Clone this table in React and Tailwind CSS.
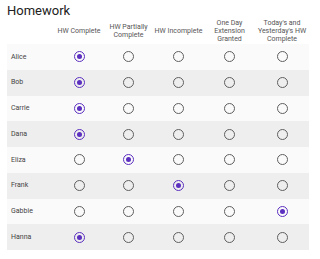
import React from "react";

const cols = [
  ["HW Complete"],
  ["HW Partially", "Complete"],
  ["HW Incomplete"],
  ["One Day", "Extension", "Granted"],
  ["Today's and", "Yesterday's HW", "Complete"],
];

const rows = [
  ["Alice", 0],
  ["Bob", 0],
  ["Carrie", 0],
  ["Dana", 0],
  ["Eliza", 1],
  ["Frank", 2],
  ["Gabbie", 4],
  ["Hanna", 0],
];

const widths = ["w-[50px]", "w-[49px]", "w-[51px]", "w-[51px]", "w-[54px]"];

function Radio({ on }) {
  return on ? (
    <div className="w-[11px] h-[11px] rounded-full border-[1.5px] border-[#5b2fc0] flex items-center justify-center">
      <div className="w-[5px] h-[5px] rounded-full bg-[#5b2fc0]" />
    </div>
  ) : (
    <div className="w-[11px] h-[11px] rounded-full border-[1.5px] border-[#5f5f5f]" />
  );
}

export default function App() {
  return (
    <div className="w-[320px] h-[259px] bg-white pl-[7px] pt-[3px]" style={{ fontFamily: "Roboto, 'Liberation Sans', sans-serif" }}>
      <div className="text-[13px] leading-[16px] text-[#212121]">Homework</div>
      <div className="w-[302px]">
        <div className="flex h-[25px] items-center pb-[2px]">
          <div className="w-[47px]" />
          {cols.map((c, i) => (
            <div key={i} className={`${widths[i]} flex flex-col items-center text-center text-[7px] leading-[8px] text-[#555]`}>
              {c.map((l, j) => (
                <div key={j} className="whitespace-nowrap">{l}</div>
              ))}
            </div>
          ))}
        </div>
        {rows.map(([name, sel], r) => (
          <div key={name} className={`flex h-[25.75px] items-center ${r % 2 === 0 ? "bg-[#fafafa]" : "bg-[#eeeeee]"}`}>
            <div className="w-[47px] pl-[4px] text-[7px] text-[#444]">{name}</div>
            {cols.map((_, i) => (
              <div key={i} className={`${widths[i]} flex justify-center`}>
                <Radio on={i === sel} />
              </div>
            ))}
          </div>
        ))}
      </div>
    </div>
  );
}
